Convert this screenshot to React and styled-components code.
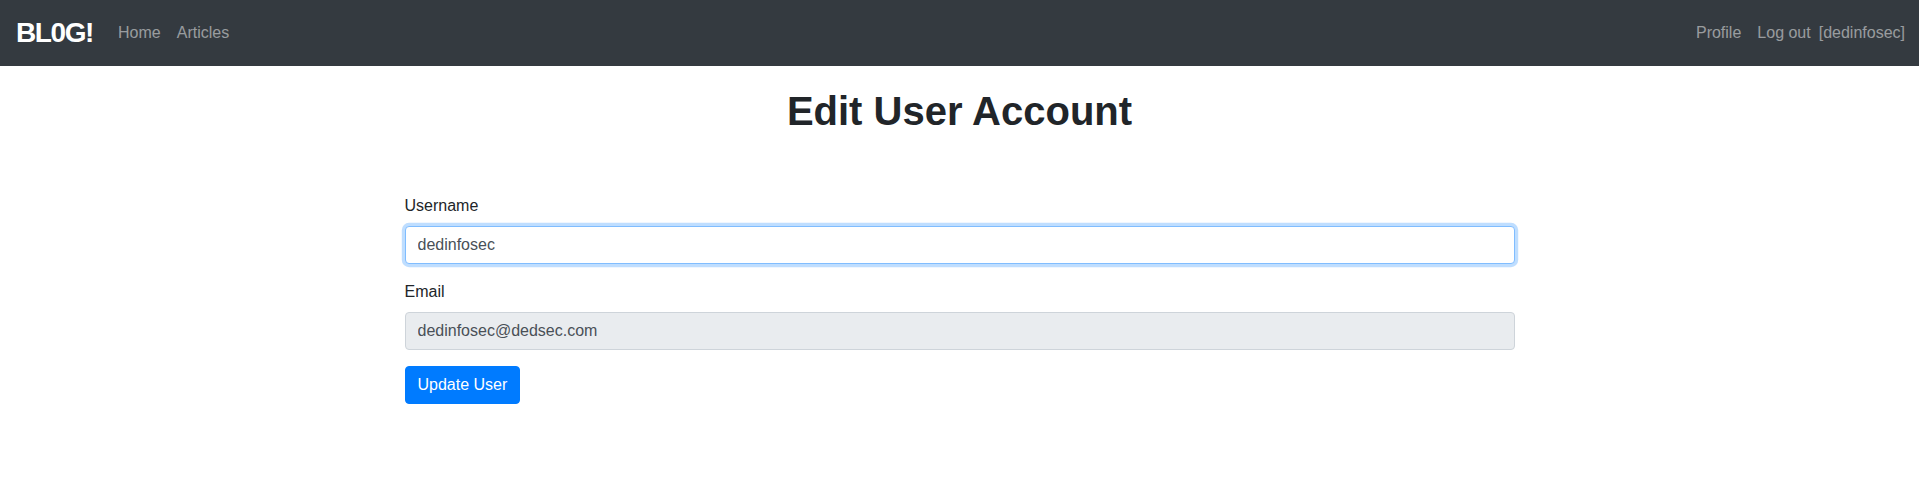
import React from "react";
import styled, { createGlobalStyle } from "styled-components";

const GlobalStyle = createGlobalStyle`
  html, body {
    margin: 0;
    padding: 0;
    background: #fff;
  }
  body {
    font-family: "Liberation Sans", Arial, sans-serif;
    font-size: 16px;
    line-height: 1.5;
    color: #212529;
  }
  *, *::before, *::after {
    box-sizing: border-box;
  }
`;

const Navbar = styled.nav`
  background-color: #343a40;
  height: 66px;
  display: flex;
  justify-content: space-between;
  align-items: center;
  padding: 0 14px 0 16px;
`;

const LeftContainer = styled.div`
  display: flex;
  align-items: center;
`;

const Brand = styled.a`
  color: #fff;
  font-size: 28px;
  font-weight: 700;
  letter-spacing: -1.4px;
  line-height: 1.5;
  margin-right: 17px;
  text-decoration: none;
`;

const NavList = styled.div`
  display: flex;
  align-items: center;
`;

const NavLink = styled.a`
  color: rgba(255, 255, 255, 0.5);
  padding: 8px;
  line-height: 24px;
  text-decoration: none;
  cursor: pointer;
`;

const NavText = styled.span`
  color: rgba(255, 255, 255, 0.5);
  line-height: 24px;
`;

const Container = styled.main`
  max-width: 1140px;
  margin: 0 auto;
  padding: 0 15px;
`;

const Title = styled.h1`
  font-size: 40px;
  font-weight: 700;
  line-height: 1.2;
  text-align: center;
  margin: 21px 0 59px;
`;

const FormGroup = styled.div`
  margin-bottom: 16px;
`;

const Label = styled.label`
  display: block;
  margin-bottom: 8px;
  line-height: 24px;
`;

const Input = styled.input`
  display: block;
  width: 100%;
  height: 38px;
  padding: 6px 12px;
  font-family: inherit;
  font-size: 16px;
  line-height: 1.5;
  color: #495057;
  background-color: ${(props) => (props.readOnly ? "#e9ecef" : "#fff")};
  border: 1px solid ${(props) => (props.$focused ? "#80bdff" : "#ced4da")};
  border-radius: 4px;
  outline: 0;
  ${(props) => props.$focused && `box-shadow: 0 0 0 3.2px rgba(0, 123, 255, 0.25);`}
`;

const Button = styled.button`
  font-family: inherit;
  font-size: 16px;
  line-height: 1.5;
  color: #fff;
  background-color: #007bff;
  border: 1px solid #007bff;
  border-radius: 4px;
  padding: 6px 12px;
  cursor: pointer;
`;

export default function App() {
  return (
    <>
      <GlobalStyle />
      <Navbar>
        <LeftContainer>
          <Brand href="#">BL0G!</Brand>
          <NavList>
            <NavLink>Home</NavLink>
            <NavLink>Articles</NavLink>
          </NavList>
        </LeftContainer>
        <NavList>
          <NavLink>Profile</NavLink>
          <NavLink>Log out</NavLink>
          <NavText>[dedinfosec]</NavText>
        </NavList>
      </Navbar>
      <Container>
        <Title>Edit User Account</Title>
        <form onSubmit={(e) => e.preventDefault()}>
          <FormGroup>
            <Label htmlFor="username">Username</Label>
            <Input id="username" defaultValue="dedinfosec" $focused />
          </FormGroup>
          <FormGroup>
            <Label htmlFor="email">Email</Label>
            <Input id="email" defaultValue="dedinfosec@dedsec.com" readOnly />
          </FormGroup>
          <Button type="submit">Update User</Button>
        </form>
      </Container>
    </>
  );
}
